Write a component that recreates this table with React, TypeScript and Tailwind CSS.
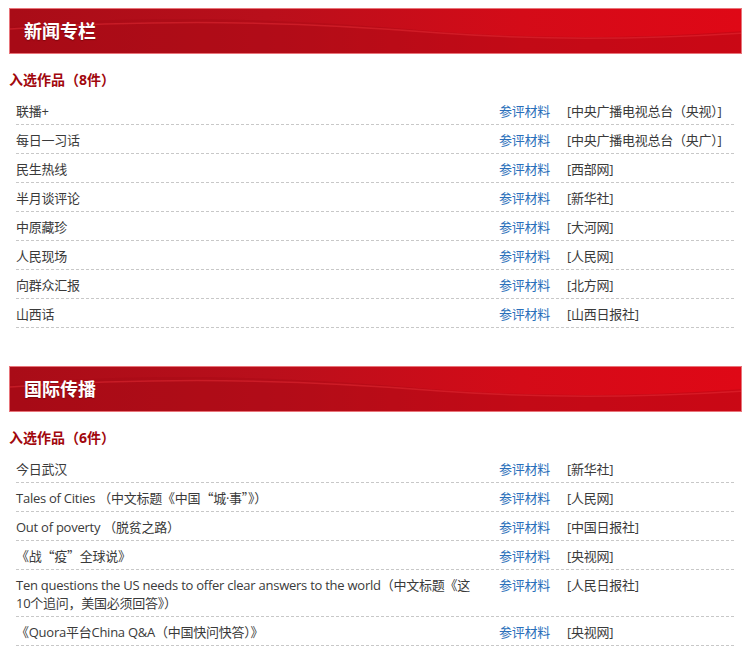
import React from "react";

type Row = { title: React.ReactNode; source: string };

const Q = ({ c }: { c: string }) => (
  <span style={{ fontFamily: '"Noto Sans CJK SC", sans-serif' }}>{c}</span>
);

const news: Row[] = [
  { title: "联播+", source: "[中央广播电视总台（央视）]" },
  { title: "每日一习话", source: "[中央广播电视总台（央广）]" },
  { title: "民生热线", source: "[西部网]" },
  { title: "半月谈评论", source: "[新华社]" },
  { title: "中原藏珍", source: "[大河网]" },
  { title: "人民现场", source: "[人民网]" },
  { title: "向群众汇报", source: "[北方网]" },
  { title: "山西话", source: "[山西日报社]" },
];

const intl: Row[] = [
  { title: "今日武汉", source: "[新华社]" },
  {
    title: (
      <>
        Tales of Cities （中文标题《中国<Q c="“" />城·事<Q c="”" />》）
      </>
    ),
    source: "[人民网]",
  },
  { title: "Out of poverty （脱贫之路）", source: "[中国日报社]" },
  {
    title: (
      <>
        《战<Q c="“" />疫<Q c="”" />全球说》
      </>
    ),
    source: "[央视网]",
  },
  {
    title: "Ten questions the US needs to offer clear answers to the world（中文标题《这10个追问，美国必须回答》）",
    source: "[人民日报社]",
  },
  { title: "《Quora平台China Q&A（中国快问快答）》", source: "[央视网]" },
];

function Banner({ title }: { title: string }) {
  return (
    <div className="relative h-[46px] w-[733px] overflow-hidden border border-[#e8747a] bg-[linear-gradient(90deg,#a90c17_0%,#b90f1b_35%,#d40b18_70%,#df0816_100%)]">
      <svg className="absolute inset-0" width="733" height="46" viewBox="0 0 733 46" preserveAspectRatio="none">
        <path d="M0 18 C 120 6, 260 8, 420 22 C 520 30, 620 30, 733 22 L733 46 L0 46 Z" fill="#a30a14" opacity="0.35" />
        <path d="M0 20 C 150 10, 280 12, 430 24 C 540 32, 640 30, 733 24" stroke="#e8303a" strokeWidth="1.5" fill="none" opacity="0.45" />
      </svg>
      <div className="relative pl-[14px] text-[18px] font-bold leading-[44px] text-white [text-shadow:0_1px_1px_rgba(80,0,0,0.5)]">
        {title}
      </div>
    </div>
  );
}

function Section({ title, count, rows }: { title: string; count: number; rows: Row[] }) {
  return (
    <div>
      <Banner title={title} />
      <div className="mt-[16px] h-[20px] text-[14px] font-bold leading-[20px] text-[#a1070d]">
        入选作品（{count}件）
      </div>
      <div className="ml-[7px] mt-[6px] w-[718px]">
        {rows.map((r, i) => (
          <div
            key={i}
            className="grid grid-cols-[483px_68px_1fr] border-b border-dashed border-[#c8c8c8] pb-[4px] pt-[6px] text-[13px] leading-[18px] tracking-[-0.25px] text-[#3a3a3a]"
          >
            <div className="pr-[18px]">{r.title}</div>
            <div className="text-[#2a6fba]">参评材料</div>
            <div>{r.source}</div>
          </div>
        ))}
      </div>
    </div>
  );
}

export default function App() {
  return (
    <div
      className="min-h-[663px] w-[750px] bg-white pl-[9px] pt-[8px]"
      style={{ fontFamily: '"Open Sans", "Noto Sans CJK SC", sans-serif' }}
    >
      <Section title="新闻专栏" count={8} rows={news} />
      <div className="h-[38px]" />
      <Section title="国际传播" count={6} rows={intl} />
    </div>
  );
}
